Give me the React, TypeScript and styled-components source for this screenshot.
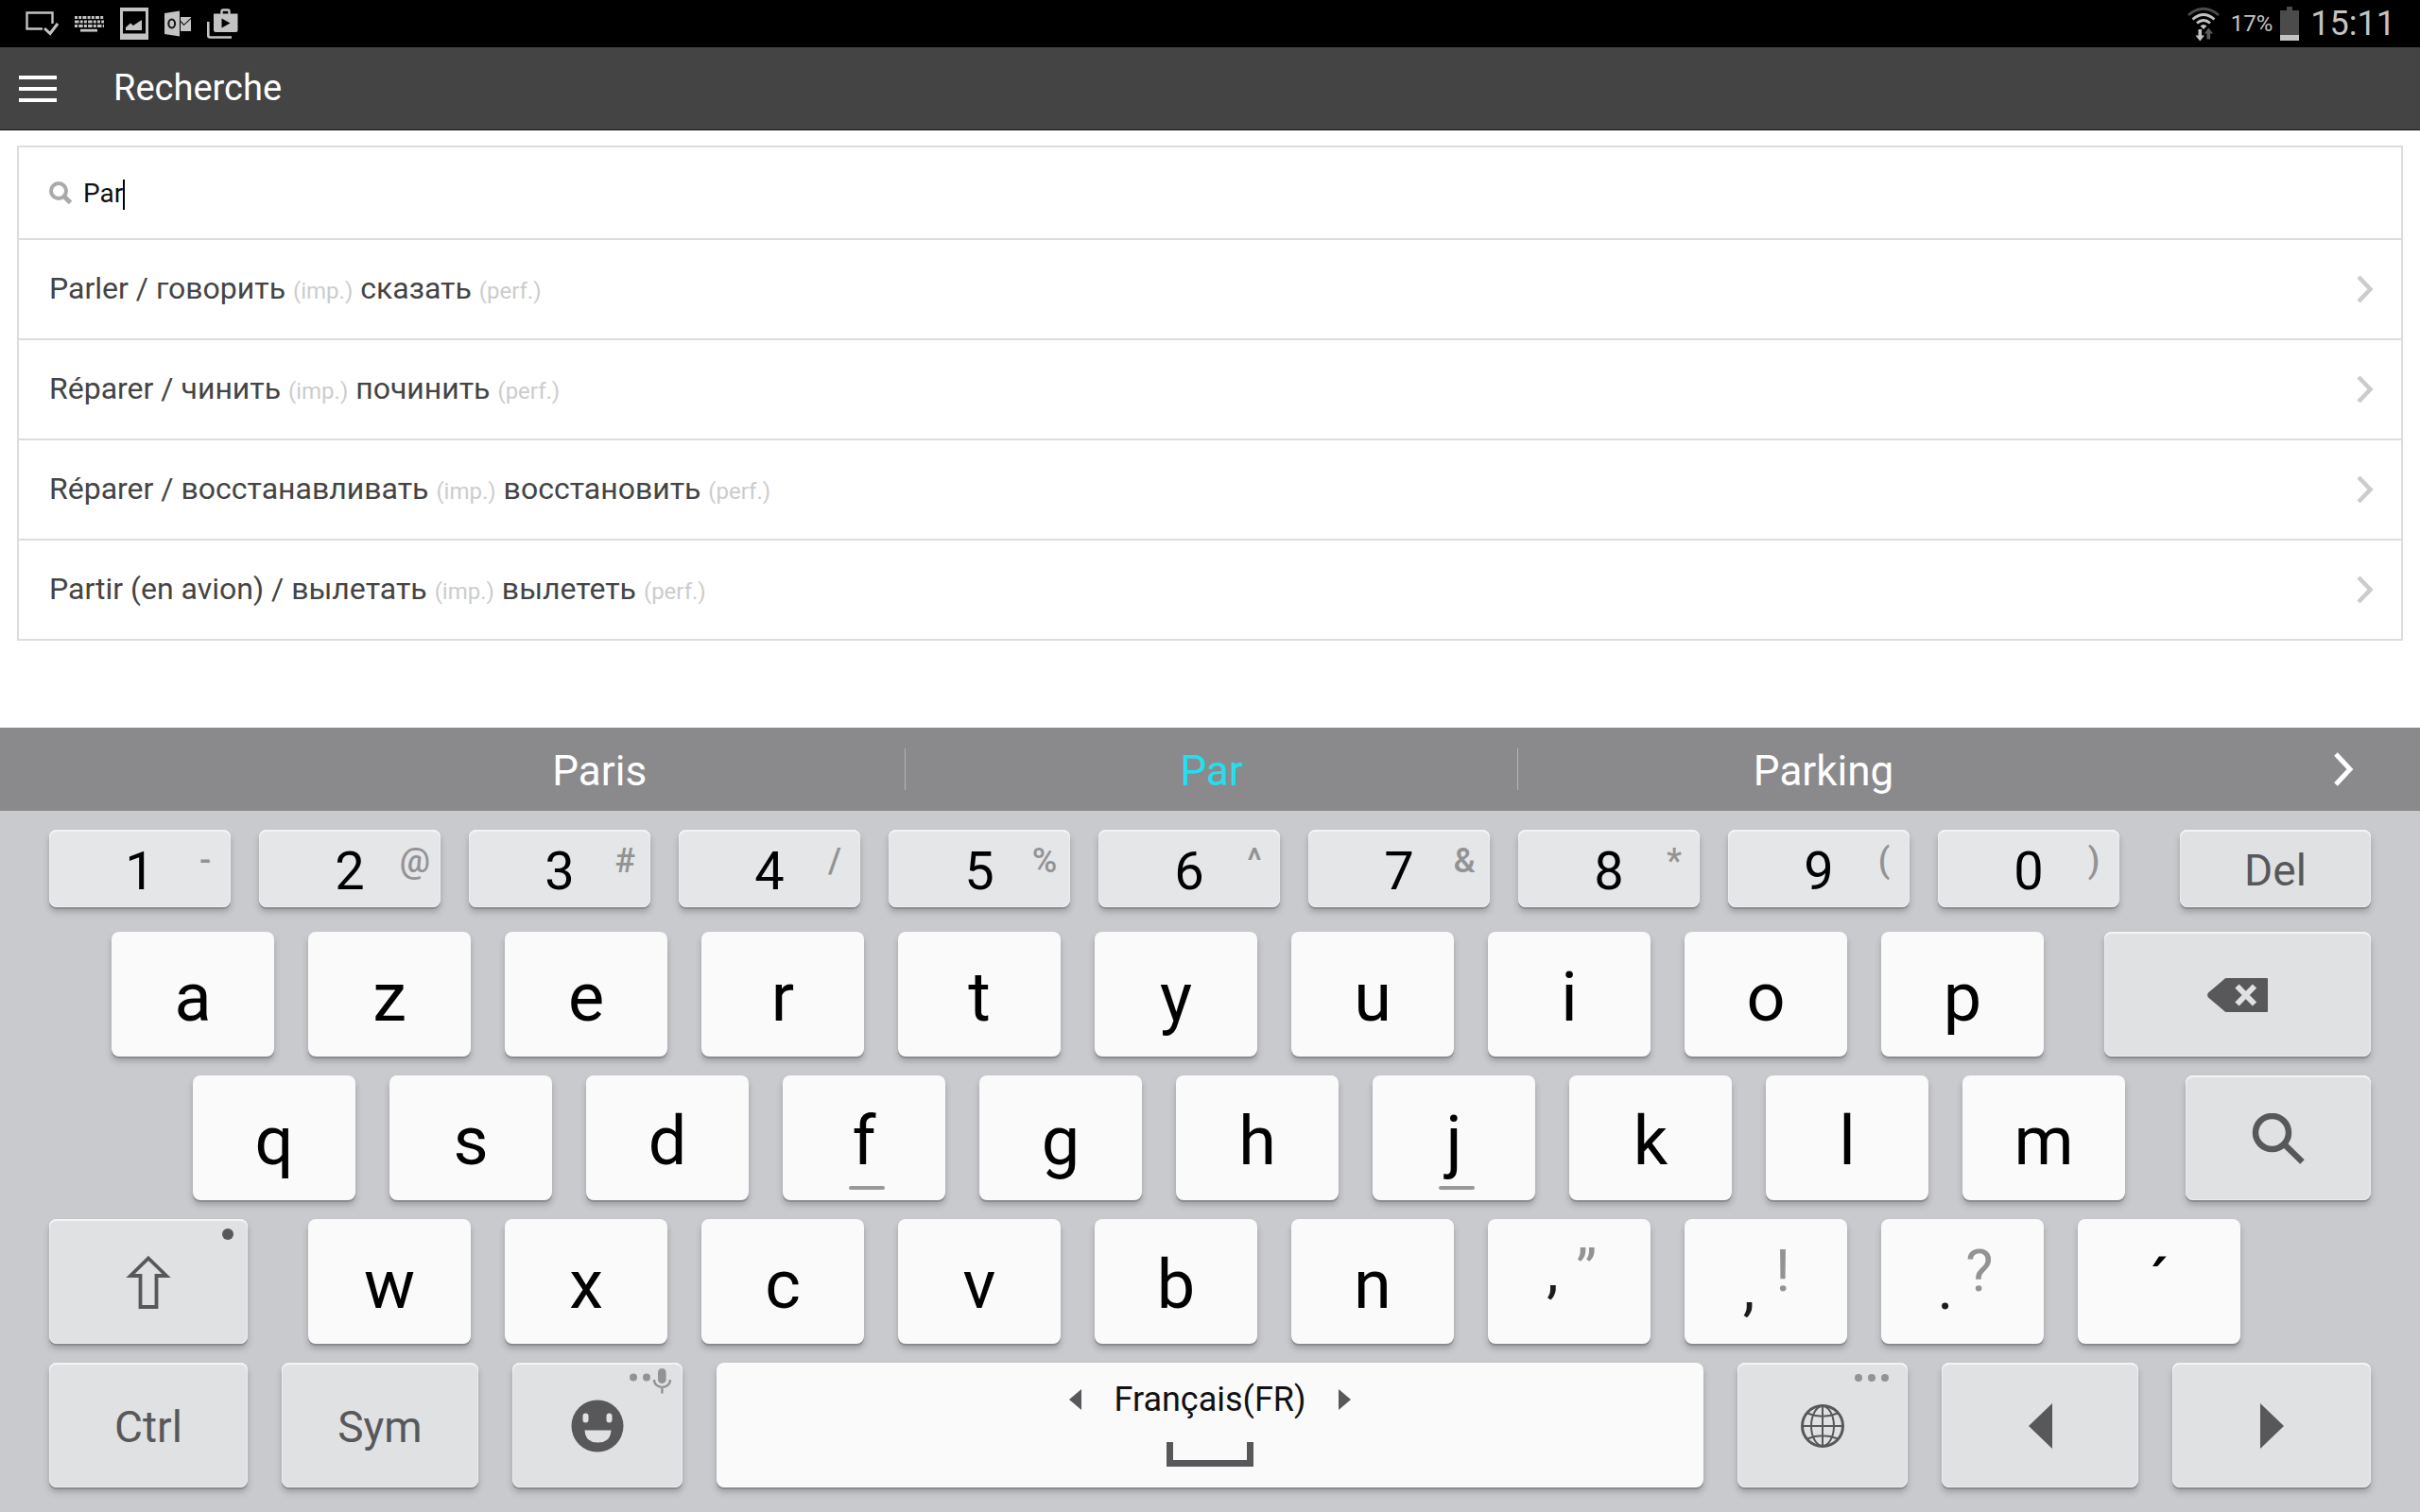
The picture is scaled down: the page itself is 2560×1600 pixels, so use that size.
import React, { useState } from 'react';
import styled, { createGlobalStyle, css } from 'styled-components';

const GlobalStyle = createGlobalStyle`
  *, *::before, *::after { box-sizing: border-box; }
  html, body { margin: 0; padding: 0; background: #fff; }
  body, button, input { font-family: Roboto, "Noto Sans", sans-serif; }
  button { appearance: none; border: 0; margin: 0; padding: 0; background: none; color: inherit; cursor: pointer; }
`;

const Screen = styled.div`
  display: flex;
  flex-direction: column;
  min-height: 100vh;
  background: #fff;
`;

/* ---------- status bar ---------- */

const StatusBar = styled.div`
  display: flex;
  align-items: center;
  justify-content: space-between;
  height: 50px;
  padding: 0 26px;
  background: #000;
  color: #c3c3c3;
`;

const StatusGroup = styled.div<{ $gap: number }>`
  display: flex;
  align-items: center;
  gap: ${p => p.$gap}px;
  svg { display: block; }
`;

const Percent = styled.span`
  padding-left: 4px;
  font-size: 24px;
  line-height: 52px;
`;

const Clock = styled.time`
  margin-left: 4px;
  font-size: 36px;
  line-height: 54px;
`;

/* ---------- app bar ---------- */

const AppBar = styled.header`
  display: flex;
  align-items: center;
  gap: 60px;
  height: 88px;
  padding: 0 20px;
  background: #444;
  border-bottom: 1px solid #111;
  color: #fff;
`;

const MenuButton = styled.button`
  display: flex;
  flex-direction: column;
  gap: 8px;
  width: 40px;
`;

const MenuLine = styled.span`
  height: 4px;
  background: #fff;
`;

const Title = styled.h1`
  margin: 0;
  padding-bottom: 2px;
  font-size: 38px;
  line-height: 44px;
  font-weight: 400;
`;

/* ---------- search and results ---------- */

const Content = styled.main`
  flex: 1;
  padding: 16px 18px;
`;

const Panel = styled.div`
  border: 2px solid #ddd;
`;

const SearchField = styled.label`
  display: flex;
  align-items: center;
  height: 96px;
  padding: 0 32px;
  svg { display: block; margin-right: 12px; }
`;

const SearchInput = styled.input`
  field-sizing: content;
  padding: 2px 0 0;
  border: 0;
  outline: 0;
  background: none;
  color: #111;
  caret-color: transparent;
  font-size: 28px;
  line-height: 32px;
`;

const Caret = styled.span`
  width: 2px;
  height: 32px;
  margin-top: 4px;
  background: #000;
`;

const Results = styled.ul`
  margin: 0;
  padding: 0;
  list-style: none;
`;

const ResultLink = styled.a`
  display: flex;
  align-items: center;
  justify-content: space-between;
  height: 106px;
  padding: 0 29px 0 32px;
  border-top: 2px solid #ddd;
  color: #444;
  font-size: 32px;
  line-height: 36px;
  text-decoration: none;
`;

const Aspect = styled.small`
  color: #ccc;
  font-size: 24px;
`;

/* ---------- keyboard ---------- */

const Keyboard = styled.section`
  background: #c9cacd;
`;

const Suggestions = styled.div`
  display: flex;
  align-items: center;
  height: 88px;
  padding-left: 311px;
  background: #8a8a8c;
`;

const Suggestion = styled.button<{ $active?: boolean }>`
  flex: 647 1 0;
  min-width: 0;
  height: 44px;
  padding-top: 2px;
  color: ${p => (p.$active ? '#1fe0f2' : '#fff')};
  font-size: 44px;
  line-height: 44px;
  & + & { border-left: 1px solid #b4b4b6; }
`;

const MoreButton = styled.button`
  display: flex;
  justify-content: flex-end;
  flex: 308 1 0;
  min-width: 0;
  svg { display: block; margin-right: 70px; }
`;

const Keys = styled.div`
  display: flex;
  flex-direction: column;
  gap: 20px;
  padding: 20px 52px 26px;
`;

const Row = styled.div<{ $gap: number; $left?: number; $right?: number; $after?: number; $height: number }>`
  display: flex;
  gap: ${p => p.$gap}px;
  height: ${p => p.$height}px;
  margin-bottom: ${p => p.$after ?? 0}px;
  padding-left: ${p => p.$left ?? 0}px;
  padding-right: ${p => p.$right ?? 0}px;
`;

type Tone = 'letter' | 'number' | 'action';
const toneFill: Record<Tone, string> = { letter: '#fafafb', number: '#e5e6e8', action: '#e0e1e3' };

const KeyCap = styled.button<{ $w: number; $tone: Tone; $apart?: number; $icon?: boolean }>`
  position: relative;
  display: flex;
  align-items: center;
  justify-content: center;
  flex: ${p => p.$w} 1 0;
  min-width: 0;
  height: 100%;
  margin-left: ${p => p.$apart ?? 0}px;
  padding-top: 8px;
  border-radius: 8px;
  background: ${p => toneFill[p.$tone]};
  box-shadow: 0 2px 0 #8c8c90, 0 5px 6px rgba(60, 60, 70, 0.3)${p => (p.$tone === 'letter' ? '' : ', inset 0 2px 0 #f4f4f6, inset 0 0 0 1px #ebecee')};
  color: #000;
  font-size: 72px;
  line-height: 72px;
  ${p => p.$tone === 'number' && css`padding-top: 6px; font-size: 56px; line-height: 56px;`}
  ${p => p.$tone === 'action' && css`padding-top: 4px; color: #58585a; font-size: 46px; line-height: 46px;`}
  ${p => p.$icon && css`padding-top: 2px;`}
  svg { display: block; }
`;

const Alternate = styled.span`
  position: absolute;
  top: 12px;
  right: 0;
  width: 54px;
  color: #939395;
  font-size: 36px;
  font-weight: 500;
  line-height: 42px;
  text-align: center;
`;

const HomeMark = styled.span`
  position: absolute;
  bottom: 11px;
  left: calc(50% - 16px);
  width: 38px;
  height: 4px;
  border-radius: 2px;
  background: #999;
`;

const Corner = styled.span<{ $top: number; $right: number }>`
  position: absolute;
  top: ${p => p.$top}px;
  right: ${p => p.$right}px;
`;

const Half = styled.span<{ $alt?: boolean; $low?: boolean }>`
  width: 36px;
  padding-top: ${p => (p.$low ? 56 : 8)}px;
  color: #1c1c1c;
  font-size: 64px;
  text-align: center;
  ${p => p.$alt && css`
    padding-top: 0;
    padding-bottom: 30px;
    color: #939395;
    font-size: 62px;
  `}
`;

const SpaceLabel = styled.span`
  display: flex;
  flex-direction: column;
  align-items: center;
  gap: 24px;
  padding-bottom: 6px;
  font-size: 36px;
  line-height: 42px;
  color: #111;
`;

const Language = styled.span`
  display: flex;
  align-items: center;
  gap: 34px;
`;

/* ---------- drawings ---------- */

const ScreenCheckIcon = () => (
  <svg width="36" height="26" viewBox="0 0 36 26" fill="none" stroke="#c3c3c3">
    <path d="M19 18.5H2.5V1.5H29.5V13" strokeWidth="2.4" />
    <path d="M21 18l6 5.5L35 13" strokeWidth="3" />
  </svg>
);

const KeyboardIcon = () => (
  <svg width="31" height="17" viewBox="0 0 31 17" stroke="#c3c3c3" strokeWidth="2.8">
    <path d="M0 1.5H31" strokeDasharray="3 1.2 3 1.2 4 1.2" />
    <path d="M0 6H31" strokeDasharray="4.5 1.2 3 1.2 3 1.2" />
    <path d="M0 10.5H31" strokeDasharray="3 1.2 4.5 1.2" />
    <path d="M6 15.2H24" />
  </svg>
);

const PictureIcon = () => (
  <svg width="30" height="34" viewBox="0 0 30 34">
    <path fillRule="evenodd" fill="#c3c3c3" d="M0 0H30V34H0ZM3 4V27.5H27V4Z" />
    <path fill="#c3c3c3" d="M6 24v-3l5-4.5 3 2.5 9-6v11z" />
  </svg>
);

const OutlookIcon = () => (
  <svg width="28" height="28" viewBox="0 0 28 28">
    <path d="M0 3L16 .5V27.5L0 25Z" fill="#c3c3c3" />
    <path d="M17 7H28V22H17Z" fill="#c3c3c3" />
    <path d="M17 11.5l3.5 4L28 8.5" fill="none" stroke="#222" strokeWidth="1.2" />
    <ellipse cx="7.7" cy="14" rx="3.4" ry="4.5" fill="none" stroke="#111" strokeWidth="2" />
  </svg>
);

const PlayStoreIcon = () => (
  <svg width="33" height="32" viewBox="0 0 33 32">
    <path d="M1.3 14V28.5a2 2 0 0 0 2 2H26" fill="none" stroke="#c3c3c3" strokeWidth="2.6" />
    <path d="M15.5 6V3a1.5 1.5 0 0 1 1.5-1.5h5a1.5 1.5 0 0 1 1.5 1.5V6" fill="none" stroke="#c3c3c3" strokeWidth="2.4" />
    <path fillRule="evenodd" fill="#c3c3c3" d="M7 5.5H32.5V23a2 2 0 0 1-2 2H9a2 2 0 0 1-2-2ZM15.5 10.5V20.5L24.5 15.5Z" />
  </svg>
);

const WifiIcon = () => (
  <svg width="34" height="37" viewBox="0 0 34 37" fill="none" strokeWidth="2.8">
    <path d="M1 9Q17-4.5 33 9" stroke="#4b4b4b" />
    <path d="M5.5 13.5Q17 3.5 28.5 13.5" stroke="#c3c3c3" />
    <path d="M10 17.5Q17 11.5 24 17.5" stroke="#c3c3c3" />
    <path d="M13.5 20.5Q17 17.5 20.5 20.5L17 24Z" fill="#c3c3c3" />
    <path d="M11.5 24h3.6v6.5H18L13.3 36.5 8.5 30.5h3Z" fill="#c3c3c3" />
    <path d="M20.5 34.5h3.6V28.5H27L22.3 22.5 17.8 28.5h2.7Z" fill="#5a5a5a" />
  </svg>
);

const BatteryIcon = () => (
  <svg width="20" height="36" viewBox="0 0 20 36">
    <path d="M7 0h6v4h7v26H0V4h7Z" fill="#4b4b4b" />
    <path d="M0 30H20V36H0Z" fill="#c3c3c3" />
  </svg>
);

const FieldSearchIcon = () => (
  <svg width="24" height="24" viewBox="0 0 24 24" fill="none" stroke="#aaa">
    <circle cx="10" cy="10" r="8" strokeWidth="4" />
    <path d="M15.5 15.5L22.5 22.5" strokeWidth="5" />
  </svg>
);

const Chevron = () => (
  <svg width="18" height="30" viewBox="0 0 18 30" fill="none" stroke="#ccc" strokeWidth="4.5">
    <path d="M2 2L14.5 15 2 28" />
  </svg>
);

const MoreIcon = () => (
  <svg width="22" height="36" viewBox="0 0 22 36" fill="none" stroke="#fff" strokeWidth="5">
    <path d="M3 2L18 18 3 34" />
  </svg>
);

const BackspaceIcon = () => (
  <svg width="64" height="36" viewBox="0 0 64 36">
    <path d="M20 0H63a1 1 0 0 1 1 1V35a1 1 0 0 1-1 1H20Q18.5 36 17 34L1 20.5Q-.8 18 1 15.5L17 2Q18.5 0 20 0Z" fill="#58585a" />
    <path d="M31.5 8.5L50 27.5M50 8.5L31.5 27.5" stroke="#e0e1e3" strokeWidth="6" />
  </svg>
);

const KeySearchIcon = () => (
  <svg width="56" height="54" viewBox="0 0 56 54" fill="none" stroke="#58585a">
    <circle cx="21.5" cy="20.5" r="17.5" strokeWidth="6.5" />
    <path d="M34 32.5L53.5 51.5" strokeWidth="6.5" />
  </svg>
);

const ShiftIcon = () => (
  <svg width="48" height="58" viewBox="0 0 48 58" fill="none" stroke="#58585a" strokeWidth="3.8">
    <path d="M24 3.5L43 22H32.5V55H15.5V22H5Z" />
  </svg>
);

const SmileIcon = () => (
  <svg width="56" height="56" viewBox="0 0 56 56">
    <circle cx="28" cy="28" r="27.5" fill="#58585a" />
    <rect x="12.5" y="14.5" width="6" height="10" rx="3" fill="#e0e1e3" />
    <rect x="37.5" y="14.5" width="6" height="10" rx="3" fill="#e0e1e3" />
    <path d="M14.5 32.5H42.5Q42 45.5 28.5 45.5 15 45.5 14.5 32.5Z" fill="#e0e1e3" />
  </svg>
);

const DotsMicIcon = () => (
  <svg width="44" height="27" viewBox="0 0 44 27">
    <circle cx="4" cy="9.5" r="4" fill="#939395" />
    <circle cx="18" cy="9.5" r="4" fill="#939395" />
    <rect x="30" y="0" width="8.6" height="16" rx="4.3" fill="#939395" />
    <path d="M26 12C26 22.5 43 22.5 43 12M34.4 20V26.5" fill="none" stroke="#939395" strokeWidth="2.4" />
  </svg>
);

const DotsIcon = () => (
  <svg width="36" height="8" viewBox="0 0 36 8" fill="#939395">
    <circle cx="4" cy="4" r="4" />
    <circle cx="18" cy="4" r="4" />
    <circle cx="32" cy="4" r="4" />
  </svg>
);

const DotIcon = () => (
  <svg width="12" height="12" viewBox="0 0 12 12" fill="#58585a">
    <circle cx="6" cy="6" r="6" />
  </svg>
);

const GlobeIcon = () => (
  <svg width="46" height="46" viewBox="0 0 46 46" fill="none" stroke="#58585a" strokeWidth="2">
    <circle cx="23" cy="23" r="21.5" strokeWidth="3" />
    <ellipse cx="23" cy="23" rx="12" ry="21" />
    <path d="M23 1V45M1 23H45M7 9.5Q23 16 39 9.5M7 36.5Q23 30 39 36.5" />
  </svg>
);

const Triangle = ({ w, h, right }: { w: number; h: number; right?: boolean }) => (
  <svg width={w} height={h} viewBox="0 0 10 10" preserveAspectRatio="none" fill="#58585a">
    <path d={right ? 'M0 0L10 5 0 10Z' : 'M10 0L0 5 10 10Z'} />
  </svg>
);

const SpaceIcon = () => (
  <svg width="92" height="26" viewBox="0 0 92 26" fill="none" stroke="#58585a" strokeWidth="7">
    <path d="M3.5 0V22.5H88.5V0" />
  </svg>
);

/* ---------- data ---------- */

const results = [
  { fr: 'Parler', imp: 'говорить', perf: 'сказать' },
  { fr: 'Réparer', imp: 'чинить', perf: 'починить' },
  { fr: 'Réparer', imp: 'восстанавливать', perf: 'восстановить' },
  { fr: 'Partir (en avion)', imp: 'вылетать', perf: 'вылететь' },
];

const numbers = [
  ['1', '-'], ['2', '@'], ['3', '#'], ['4', '/'], ['5', '%'],
  ['6', '^'], ['7', '&'], ['8', '*'], ['9', '('], ['0', ')'],
];

export default function App() {
  const [query, setQuery] = useState('Par');
  const type = (c: string) => () => setQuery(q => q + c);

  const letter = (c: string) => (
    <KeyCap key={c} $w={172} $tone="letter" onClick={type(c)}>
      {c}
      {(c === 'f' || c === 'j') && <HomeMark />}
    </KeyCap>
  );

  return (
    <Screen>
      <GlobalStyle />
      <StatusBar>
        <StatusGroup $gap={17}>
          <ScreenCheckIcon />
          <KeyboardIcon />
          <PictureIcon />
          <OutlookIcon />
          <PlayStoreIcon />
        </StatusGroup>
        <StatusGroup $gap={8}>
          <WifiIcon />
          <Percent>17%</Percent>
          <BatteryIcon />
          <Clock>15:11</Clock>
        </StatusGroup>
      </StatusBar>

      <AppBar>
        <MenuButton aria-label="Menu">
          <MenuLine />
          <MenuLine />
          <MenuLine />
        </MenuButton>
        <Title>Recherche</Title>
      </AppBar>

      <Content>
        <Panel>
          <SearchField>
            <FieldSearchIcon />
            <SearchInput aria-label="Recherche" value={query} onChange={e => setQuery(e.target.value)} />
            <Caret />
          </SearchField>
          <Results>
            {results.map(r => (
              <li key={r.imp}>
                <ResultLink href="#">
                  <span>
                    {r.fr} / {r.imp} <Aspect>(imp.)</Aspect> {r.perf} <Aspect>(perf.)</Aspect>
                  </span>
                  <Chevron />
                </ResultLink>
              </li>
            ))}
          </Results>
        </Panel>
      </Content>

      <Keyboard>
        <Suggestions>
          {['Paris', 'Par', 'Parking'].map(s => (
            <Suggestion key={s} $active={s === 'Par'} onClick={() => setQuery(s)}>{s}</Suggestion>
          ))}
          <MoreButton aria-label="Plus"><MoreIcon /></MoreButton>
        </Suggestions>

        <Keys>
          <Row $gap={30} $height={82} $after={6}>
            {numbers.map(([n, alt]) => (
              <KeyCap key={n} $w={192} $tone="number" onClick={type(n)}>
                {n}
                <Alternate>{alt}</Alternate>
              </KeyCap>
            ))}
            <KeyCap $w={202} $tone="action" $apart={34}>Del</KeyCap>
          </Row>

          <Row $gap={36} $height={132} $left={66}>
            {[...'azertyuiop'].map(letter)}
            <KeyCap $w={282} $tone="action" $apart={28} $icon aria-label="Effacer" onClick={() => setQuery(q => q.slice(0, -1))}>
              <BackspaceIcon />
            </KeyCap>
          </Row>

          <Row $gap={36} $height={132} $left={152}>
            {[...'qsdfghjklm'].map(letter)}
            <KeyCap $w={196} $tone="action" $apart={28} $icon aria-label="Rechercher"><KeySearchIcon /></KeyCap>
          </Row>

          <Row $gap={36} $height={132} $right={138}>
            <KeyCap $w={210} $tone="action" $icon aria-label="Majuscule">
              <ShiftIcon />
              <Corner $top={10} $right={15}><DotIcon /></Corner>
            </KeyCap>
            <KeyCap $w={172} $tone="letter" $apart={28} onClick={type('w')}>w</KeyCap>
            {[...'xcvbn'].map(letter)}
            <KeyCap $w={172} $tone="letter" onClick={type('’')}><Half $low>’</Half><Half $alt>”</Half></KeyCap>
            <KeyCap $w={172} $tone="letter" onClick={type(',')}><Half>,</Half><Half $alt>!</Half></KeyCap>
            <KeyCap $w={172} $tone="letter" onClick={type('.')}><Half>.</Half><Half $alt>?</Half></KeyCap>
            <KeyCap $w={172} $tone="letter">´</KeyCap>
          </Row>

          <Row $gap={36} $height={132}>
            <KeyCap $w={210} $tone="action">Ctrl</KeyCap>
            <KeyCap $w={208} $tone="action">Sym</KeyCap>
            <KeyCap $w={180} $tone="action" $icon aria-label="Émoticônes">
              <SmileIcon />
              <Corner $top={6} $right={12}><DotsMicIcon /></Corner>
            </KeyCap>
            <KeyCap $w={1044} $tone="letter" $icon onClick={type(' ')}>
              <SpaceLabel>
                <Language>
                  <Triangle w={13} h={22} />
                  Français(FR)
                  <Triangle w={13} h={22} right />
                </Language>
                <SpaceIcon />
              </SpaceLabel>
            </KeyCap>
            <KeyCap $w={180} $tone="action" $icon aria-label="Langue">
              <GlobeIcon />
              <Corner $top={12} $right={20}><DotsIcon /></Corner>
            </KeyCap>
            <KeyCap $w={208} $tone="action" $icon aria-label="Gauche"><Triangle w={25} h={48} /></KeyCap>
            <KeyCap $w={210} $tone="action" $icon aria-label="Droite"><Triangle w={25} h={48} right /></KeyCap>
          </Row>
        </Keys>
      </Keyboard>
    </Screen>
  );
}
